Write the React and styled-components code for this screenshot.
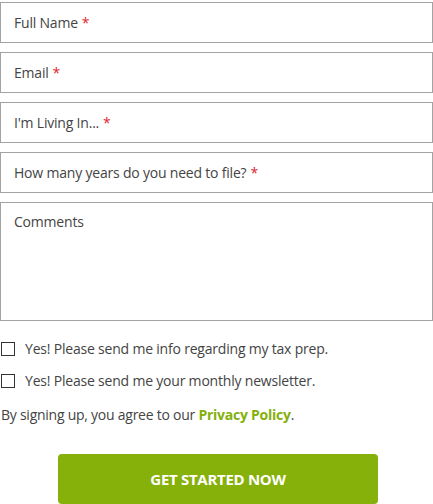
import React from 'react';
import styled, { createGlobalStyle } from 'styled-components';

const GlobalStyle = createGlobalStyle`
  body {
    margin: 0;
    background: #fff;
    font-family: "Open Sans", "Noto Sans", sans-serif;
    color: #444;
  }
`;

const Form = styled.form`
  width: 433px;
  padding-top: 2px;
  display: flex;
  flex-direction: column;
`;

const Fields = styled.div`
  display: flex;
  flex-direction: column;
  gap: 9px;
`;

const Field = styled.div`
  box-sizing: border-box;
  width: 433px;
  height: ${(p) => (p.tall ? '119px' : '41px')};
  border: 1px solid #a3a3a3;
  background: #fff;
  padding: ${(p) => (p.tall ? '9px 13px' : '0 13px')};
  display: flex;
  align-items: ${(p) => (p.tall ? 'flex-start' : 'center')};
  font-size: 14px;
  letter-spacing: -0.2px;
  color: #444;
`;

const Req = styled.span`
  color: #e0262b;
  margin-left: 4px;
`;

const Checks = styled.div`
  margin-top: 18px;
  display: flex;
  flex-direction: column;
  gap: 13px;
`;

const CheckRow = styled.label`
  display: flex;
  align-items: center;
  gap: 10px;
  font-size: 14px;
  letter-spacing: -0.2px;
  line-height: 19px;
`;

const Box = styled.span`
  box-sizing: border-box;
  width: 14px;
  height: 14px;
  margin-left: 1px;
  border: 1px solid #333;
  background: #fff;
`;

const Terms = styled.p`
  margin: 15px 0 0 1px;
  font-size: 14px;
  letter-spacing: -0.25px;
  line-height: 19px;
`;

const Link = styled.a`
  color: #84b00c;
  font-weight: 700;
  text-decoration: none;
`;

const Button = styled.button`
  margin: 30px 0 0 58px;
  width: 320px;
  height: 50px;
  border: 0;
  border-radius: 4px;
  background: #86b00a;
  color: #fff;
  font-family: "Open Sans", "Noto Sans", sans-serif;
  font-weight: 700;
  font-size: 15px;
  letter-spacing: -0.3px;
`;

export default function App() {
  return (
    <>
      <GlobalStyle />
      <Form>
        <Fields>
          <Field>Full Name<Req>*</Req></Field>
          <Field>Email<Req>*</Req></Field>
          <Field>I'm Living In...<Req>*</Req></Field>
          <Field>How many years do you need to file?<Req>*</Req></Field>
          <Field tall>Comments</Field>
        </Fields>
        <Checks>
          <CheckRow><Box />Yes! Please send me info regarding my tax prep.</CheckRow>
          <CheckRow><Box />Yes! Please send me your monthly newsletter.</CheckRow>
        </Checks>
        <Terms>
          By signing up, you agree to our <Link href="#">Privacy Policy</Link>.
        </Terms>
        <Button type="button">GET STARTED NOW</Button>
      </Form>
    </>
  );
}
